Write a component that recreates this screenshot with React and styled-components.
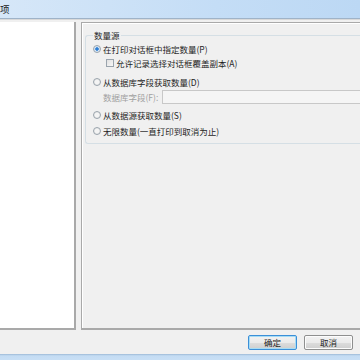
import React from 'react';
import styled, { createGlobalStyle } from 'styled-components';

const GlobalStyle = createGlobalStyle`
  html, body {
    margin: 0;
    padding: 0;
    background: #f0f0f0;
  }
  body {
    font-family: "Noto Sans CJK SC", "Liberation Sans", sans-serif;
    font-size: 8.5px;
    color: #1e1e1e;
  }
`;

const Window = styled.div`
  width: 360px;
  height: 360px;
  display: flex;
  flex-direction: column;
  overflow: hidden;
  background: #f0f0f0;
`;

const TitleBar = styled.div`
  height: 18px;
  flex: none;
  display: flex;
  align-items: center;
  background: linear-gradient(90deg, #d6e7f8 0%, #c4ddf6 60%, #bcd8f4 100%);
  border-bottom: 1px solid #9fb3c8;
  font-size: 9.5px;
  color: #1a1a1a;
  box-shadow: 0 1px 0 #d9d9d9;
`;

const Body = styled.div`
  flex: 1;
  display: flex;
  gap: 5px;
  padding-top: 3px;
  min-height: 0;
`;

const TreePanel = styled.div`
  width: 74px;
  flex: none;
  background: #fff;
  border-right: 2px solid #a9a9a9;
  border-bottom: 2px solid #a9a9a9;
`;

const OptionsPanel = styled.div`
  flex: 1;
  border: 1px solid #a9a9a9;
  border-right: none;
  border-bottom-width: 2px;
  box-shadow: inset 1px 1px 0 #ffffff;
  padding: 7px 0 0 3px;
`;

const GroupBox = styled.fieldset`
  margin: 0;
  padding: 1px 0 5px 7px;
  border: 1px solid #d5dfe5;
  border-right: none;
  border-radius: 3px 0 0 3px;
  display: flex;
  flex-direction: column;
  legend {
    padding: 0 1px;
    font-size: 8.5px;
    line-height: 11px;
  }
`;

const Row = styled.label`
  display: flex;
  align-items: center;
  gap: 2px;
  height: 14px;
  margin-top: ${(p) => p.mt || 0}px;
  padding-left: ${(p) => p.indent || 0}px;
  white-space: nowrap;
  color: ${(p) => (p.disabled ? '#a0a0a0' : '#1e1e1e')};
`;

const Radio = styled.span`
  width: 8px;
  height: 8px;
  flex: none;
  border-radius: 50%;
  box-sizing: border-box;
  border: 1px solid #9aa4ad;
  background: radial-gradient(circle, ${(p) => (p.checked ? '#2f7fd4 0 35%, #d7e6f5 45%' : '#f4f4f4 0 40%, #dcdcdc 100%')});
`;

const Check = styled.span`
  width: 8px;
  height: 8px;
  flex: none;
  box-sizing: border-box;
  border: 1px solid #9aa4ad;
  background: linear-gradient(135deg, #e0e0e0, #f8f8f8);
`;

const FieldInput = styled.div`
  flex: 1;
  height: 14px;
  box-sizing: border-box;
  margin-left: 2px;
  background: #f5f5f5;
  border: 1px solid #c8c8c8;
  border-right: none;
`;

const Footer = styled.div`
  height: 24px;
  flex: none;
  display: flex;
  justify-content: flex-end;
  align-items: center;
  gap: 7px;
  padding-right: 7px;
`;

const Button = styled.button`
  width: 49px;
  height: 15px;
  padding: 0;
  font-family: inherit;
  font-size: 8.5px;
  color: #1e1e1e;
  border-radius: 2px;
  border: 1px solid ${(p) => (p.primary ? '#3c8fd8' : '#8e8f8f')};
  background: linear-gradient(#f2f2f2 0%, #ebebeb 50%, #dddddd 51%, #cfcfcf 100%);
  box-shadow: ${(p) => (p.primary ? 'inset 0 0 0 1px #a6dcf5' : 'inset 0 0 0 1px #fcfcfc')};
`;

const Frame = styled.div`
  height: 6px;
  flex: none;
  background: linear-gradient(#9cb9d6, #c4dcf3 30%, #c8dff5);
`;

export default function App() {
  return (
    <>
      <GlobalStyle />
      <Window>
        <TitleBar>项</TitleBar>
        <Body>
          <TreePanel />
          <OptionsPanel>
            <GroupBox>
              <legend>数量源</legend>
              <Row>
                <Radio checked />
                在打印对话框中指定数量(P)
              </Row>
              <Row indent={13}>
                <Check />
                允许记录选择对话框覆盖副本(A)
              </Row>
              <Row mt={5}>
                <Radio />
                从数据库字段获取数量(D)
              </Row>
              <Row indent={10} mt={1} disabled>
                数据库字段(F):
                <FieldInput />
              </Row>
              <Row mt={4}>
                <Radio />
                从数据源获取数量(S)
              </Row>
              <Row mt={2}>
                <Radio />
                无限数量(一直打印到取消为止)
              </Row>
            </GroupBox>
          </OptionsPanel>
        </Body>
        <Footer>
          <Button primary>确定</Button>
          <Button>取消</Button>
        </Footer>
        <Frame />
      </Window>
    </>
  );
}
